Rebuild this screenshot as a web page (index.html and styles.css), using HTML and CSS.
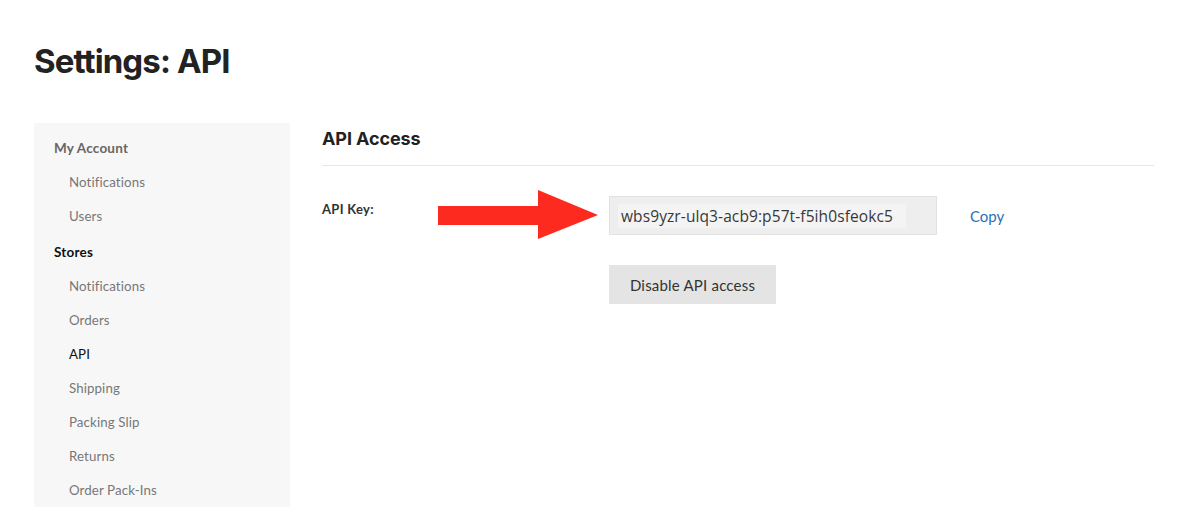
FILE: index.html
```html
<!DOCTYPE html>
<html>
<head>
<meta charset="utf-8">
<link rel="stylesheet" href="styles.css">
</head>
<body>
<div class="page">
  <h1 class="title">Settings: API</h1>
  <div class="layout">
    <nav class="sidebar">
      <div class="group">
        <div class="group-title muted">My Account</div>
        <div class="item">Notifications</div>
        <div class="item">Users</div>
      </div>
      <div class="group stores">
        <div class="group-title">Stores</div>
        <div class="item">Notifications</div>
        <div class="item">Orders</div>
        <div class="item active">API</div>
        <div class="item">Shipping</div>
        <div class="item">Packing Slip</div>
        <div class="item">Returns</div>
        <div class="item">Order Pack-Ins</div>
      </div>
    </nav>
    <main class="main">
      <h2 class="section-title">API Access</h2>
      <div class="form-row">
        <div class="label">API Key:</div>
        <div class="field">
          <div class="key-row">
            <div class="key-box"><span class="key-text">wbs9yzr-ulq3-acb9:p57t-f5ih0sfeokc5</span></div>
            <a class="copy">Copy</a>
          </div>
          <button class="btn">Disable API access</button>
        </div>
        <svg class="arrow" width="162" height="52" viewBox="0 0 162 52">
          <polygon points="0,16 100,16 100,0 160,25 100,49 100,35 0,35" fill="#fc2a1f"/>
        </svg>
      </div>
    </main>
  </div>
</div>
</body>
</html>
```
FILE: styles.css
```css
* { box-sizing: border-box; }
html, body { margin: 0; padding: 0; background: #fff; }
body {
  font-family: "Lato", "Inter", "Liberation Sans", sans-serif;
  color: #222;
  width: 1198px;
  height: 507px;
  overflow: hidden;
}
.page { padding: 0 0 0 34px; }
.title {
  margin: 0;
  padding-top: 38px;
  height: 123px;
  font-family: "Inter", "Liberation Sans", sans-serif;
  font-size: 33px;
  font-weight: 700;
  letter-spacing: -0.9px;
  line-height: 46px;
  color: #222;
}
.layout { display: flex; gap: 32px; }
.sidebar {
  width: 256px;
  background: #f7f7f7;
  padding: 8px 0 20px 0;
  min-height: 400px;
}
.group-title {
  padding-left: 20px;
  font-size: 13.5px;
  font-weight: 700;
  line-height: 34px;
  color: #111;
  letter-spacing: 0.2px;
}
.group-title.muted { color: #666; }
.stores { margin-top: 2px; }
.item {
  padding-left: 35px;
  font-size: 13.3px;
  line-height: 34px;
  color: #777;
  letter-spacing: 0.1px;
}
.item.active { color: #111; }
.main { width: 832px; }
.section-title {
  margin: 0;
  font-family: "Inter", "Liberation Sans", sans-serif;
  font-size: 18px;
  font-weight: 700;
  letter-spacing: -0.1px;
  color: #222;
  line-height: 30px;
  padding-top: 1px;
  padding-bottom: 11px;
  border-bottom: 1px solid #e6e6e6;
}
.form-row {
  position: relative;
  display: flex;
  padding-top: 30px;
}
.label {
  width: 287px;
  font-size: 13px;
  font-weight: 700;
  color: #333;
  padding-top: 5px;
  line-height: 16px;
  letter-spacing: 0.3px;
}
.key-row { display: flex; align-items: center; gap: 33px; }
.key-box {
  width: 328px;
  height: 39px;
  background: #eee;
  border: 1px solid #e2e2e2;
  padding: 7px 0 0 8px;
}
.key-text {
  display: inline-block;
  background: #f4f4f4;
  height: 24px;
  line-height: 24px;
  padding: 0 13px 0 3px;
  font-family: "Open Sans", "Liberation Sans", sans-serif;
  font-size: 15.5px;
  color: #383838;
  letter-spacing: 0.1px;
}
.copy {
  color: #2a70b8;
  font-size: 15px;
  cursor: pointer;
}
.btn {
  display: block;
  margin-top: 30px;
  width: 167px;
  height: 39px;
  background: #e4e4e4;
  border: none;
  font-family: "Lato", "Liberation Sans", sans-serif;
  font-size: 15px;
  letter-spacing: 0.2px;
  color: #333;
  padding: 0;
}
.arrow {
  position: absolute;
  left: 116px;
  top: 24px;
}
```
